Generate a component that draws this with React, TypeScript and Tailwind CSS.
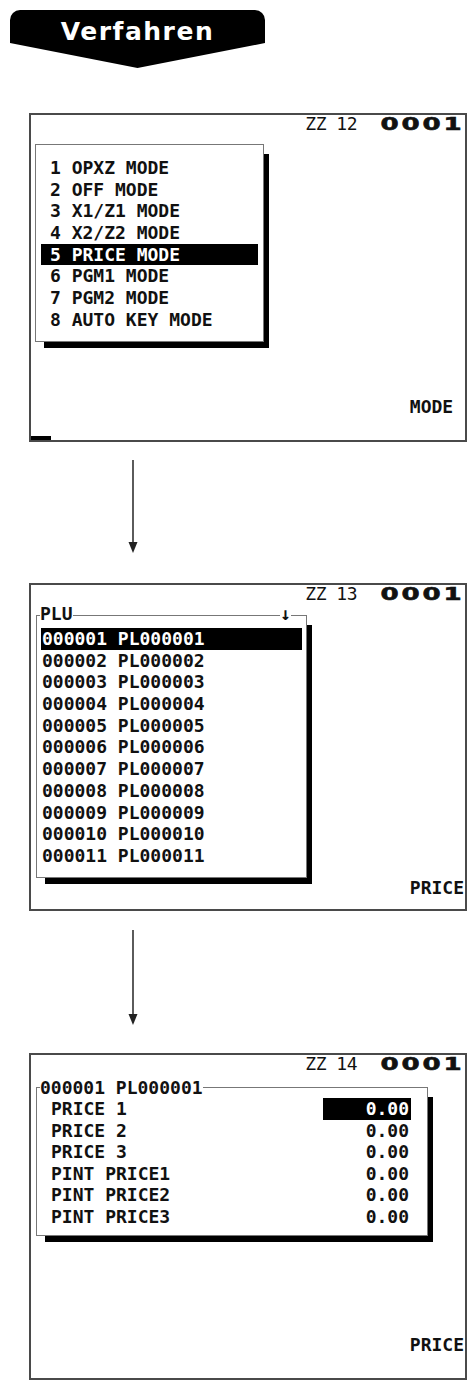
import React from 'react';

const menuItems = [
  '1 OPXZ MODE',
  '2 OFF MODE',
  '3 X1/Z1 MODE',
  '4 X2/Z2 MODE',
  '5 PRICE MODE',
  '6 PGM1 MODE',
  '7 PGM2 MODE',
  '8 AUTO KEY MODE',
];

const pluRows = Array.from({ length: 11 }, (_, i) => {
  const n = String(i + 1).padStart(6, '0');
  return `${n} PL${n}`;
});

const priceRows = ['PRICE 1', 'PRICE 2', 'PRICE 3', 'PINT PRICE1', 'PINT PRICE2', 'PINT PRICE3'];

function Arrow({ h }: { h: number }) {
  return (
    <svg width="12" height={h} viewBox={`0 0 12 ${h}`} className="block">
      <line x1="6" y1="0" x2="6" y2={h - 9} stroke="#333" strokeWidth="1.6" />
      <polygon points={`1.5,${h - 11} 10.5,${h - 11} 6,${h}`} fill="#222" />
    </svg>
  );
}

interface ScreenProps {
  no: string;
  label: string;
  cursor?: boolean;
  height: string;
  top: string;
  children: React.ReactNode;
}

function Screen({ no, label, cursor = false, height, top, children }: ScreenProps) {
  return (
    <div
      className={`ml-[29px] w-[438px] border-2 border-[#4a4a4a] flex flex-col font-['DejaVu_Sans_Mono','Liberation_Mono',monospace] font-bold text-[18px] text-[#111] ${height} ${top}`}
    >
      {/* header */}
      <div className="h-[18px] flex items-center justify-end pr-[2px] leading-none">
        <span className="font-normal tracking-[-0.5px]">ZZ {no}</span>
        <span className="ml-[22px] flex font-['DejaVu_Sans',sans-serif] font-bold text-[18px]">
          {'0001'.split('').map((d, i) => (
            <span key={i} className="inline-block w-[21px] text-center scale-x-[1.45] [-webkit-text-stroke:0.6px_#111]">
              {d}
            </span>
          ))}
        </span>
      </div>

      {children}

      {/* mode label + cursor */}
      <div className="mt-auto flex justify-end pr-[1px] leading-[20px] whitespace-pre">{label}</div>
      <div className={`mt-[19px] h-[4px] w-[20px] ${cursor ? 'bg-black' : ''}`} />
    </div>
  );
}

export default function App() {
  return (
    <div className="w-[474px] h-[1387px] bg-white pt-[10px] overflow-hidden">
      {/* Heading banner */}
      <div className="ml-[10px] w-[255px] h-[58px] bg-black rounded-[10px] [clip-path:polygon(0_0,100%_0,100%_57%,50%_100%,0_57%)] flex justify-center pt-[8px]">
        <span className="font-['DejaVu_Sans',sans-serif] font-bold text-white text-[25px] tracking-[1.5px] leading-[28px] h-[28px]">
          Verfahren
        </span>
      </div>

      {/* Screen 1: mode menu */}
      <Screen no="12" label={'MODE '} cursor height="h-[329px]" top="mt-[45px]">
        <div className="ml-[4px] mt-[11px] w-[229px] h-[198px] border border-[#777] bg-white shadow-[7px_8px_0_-2px_#000] pt-[12px]">
          {menuItems.map(item => {
            const active = item.startsWith('5');
            return (
              <div
                key={item}
                className={`mx-[5px] h-[21.7px] leading-[21.7px] pl-[9px] whitespace-pre ${
                  active ? 'bg-black text-white' : ''
                }`}
              >
                {item}
              </div>
            );
          })}
        </div>
      </Screen>

      <div className="ml-[127px] mt-[18px]">
        <Arrow h={93} />
      </div>

      {/* Screen 2: PLU list */}
      <Screen no="13" label="PRICE" cursor height="h-[328px]" top="mt-[30px]">
        <div className="ml-[5px] mt-[12px] w-[271px] border border-[#777] bg-white shadow-[7px_8px_0_-2px_#000] pb-[10px]">
          <div className="-mt-[13px] h-[22px] flex items-center justify-between pl-[3px] pr-[15px] leading-none">
            <span className="bg-white">PLU</span>
            <span className="bg-white text-[#111]">↓</span>
          </div>
          <div className="pt-[3px]">
            {pluRows.map((row, i) => (
              <div
                key={row}
                className={`mx-[4px] h-[21.7px] leading-[21.7px] pl-[1px] whitespace-pre ${
                  i === 0 ? 'bg-black text-white' : ''
                }`}
              >
                {row}
              </div>
            ))}
          </div>
        </div>
      </Screen>

      <div className="ml-[127px] mt-[19px]">
        <Arrow h={95} />
      </div>

      {/* Screen 3: price entry */}
      <Screen no="14" label="PRICE" height="h-[327px]" top="mt-[28px]">
        <div className="ml-[5px] mt-[14px] w-[392px] border border-[#777] bg-white shadow-[7px_8px_0_-2px_#000] pb-[7px]">
          <div className="-mt-[10px] h-[20px] flex items-center pl-[3px] leading-none">
            <span className="bg-white whitespace-pre">000001 PL000001</span>
          </div>
          {priceRows.map((row, i) => (
            <div key={row} className="h-[21.6px] leading-[21.6px] flex justify-between pl-[14px] pr-[16px]">
              <span className="whitespace-pre">{row}</span>
              <span className={`w-[88px] text-right pr-[2px] ${i === 0 ? 'bg-black text-white' : ''}`}>
                0.00
              </span>
            </div>
          ))}
        </div>
      </Screen>
    </div>
  );
}
